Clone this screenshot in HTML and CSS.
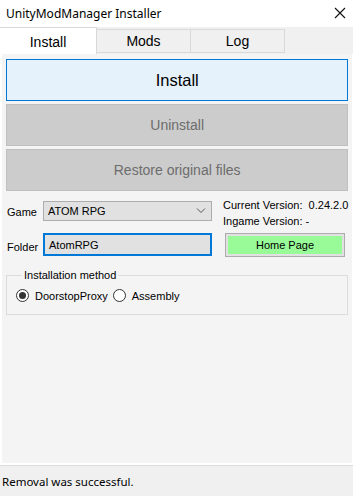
FILE: index.html
```html
<!DOCTYPE html>
<html lang="en">
<head>
  <meta charset="UTF-8">
  <meta name="viewport" content="width=device-width, initial-scale=1.0">
  <title>UnityModManager Installer</title>
  <link rel="stylesheet" href="styles.css">
</head>
<body>
  <div class="titlebar">
    <span class="title">UnityModManager Installer</span>
    <svg class="close" width="12" height="12" viewBox="0 0 12 12">
      <path d="M1 1 L11 11 M11 1 L1 11" stroke="#111" stroke-width="1.1" fill="none"/>
    </svg>
  </div>

  <div class="tabs">
    <div class="tab active">Install</div>
    <div class="tab">Mods</div>
    <div class="tab">Log</div>
  </div>

  <div class="main">
    <div class="page">
      <button class="big-btn primary">Install</button>
      <button class="big-btn" disabled>Uninstall</button>
      <button class="big-btn" disabled>Restore original files</button>

      <div class="settings">
        <span class="label">Game</span>
        <div class="combo">
          <span>ATOM RPG</span>
          <svg width="10" height="6" viewBox="0 0 10 6">
            <path d="M1 0.5 L5 4.5 L9 0.5" stroke="#555" stroke-width="1" fill="none"/>
          </svg>
        </div>
        <div class="versions">
          <div>Current Version:&nbsp; 0.24.2.0</div>
          <div>Ingame Version: -</div>
        </div>

        <span class="label">Folder</span>
        <div class="folder">AtomRPG</div>
        <button class="home-btn">Home Page</button>
      </div>

      <fieldset class="method">
        <legend>Installation method</legend>
        <label class="radio checked"><span class="dot"></span>DoorstopProxy</label>
        <label class="radio"><span class="dot"></span>Assembly</label>
      </fieldset>
    </div>
  </div>

  <div class="status">Removal was successful.</div>
</body>
</html>
```

FILE: styles.css
```css
* {
  box-sizing: border-box;
}

body {
  margin: 0;
  width: 353px;
  height: 496px;
  display: flex;
  flex-direction: column;
  background-color: #ffffff;
  font-family: "Liberation Sans", Arial, sans-serif;
  color: #000;
  overflow: hidden;
}

.titlebar {
  height: 27px;
  flex-shrink: 0;
  display: flex;
  align-items: center;
  justify-content: space-between;
  padding: 0 7px 0 6px;
  font-family: "Noto Sans", sans-serif;
  font-size: 12px;
}

.close {
  margin-top: -1px;
}

.tabs {
  height: 27px;
  flex-shrink: 0;
  display: flex;
  align-items: flex-start;
  background-color: #f0f0f0;
}

.tab {
  width: 94px;
  height: 24px;
  margin-top: 2px;
  border: 1px solid #d9d9d9;
  border-left: none;
  background-color: #f0f0f0;
  font-size: 14px;
  display: flex;
  align-items: center;
  justify-content: center;
}

.tab.active {
  width: 97px;
  height: 27px;
  margin-top: 0;
  border-bottom: none;
  background-color: #ffffff;
  padding-top: 1px;
}

.main {
  flex: 1;
  display: flex;
  padding: 0 1px 2px 2px;
  border-bottom: 1px solid #dcdcdc;
}

.page {
  flex: 1;
  display: flex;
  flex-direction: column;
  gap: 3px;
  padding: 5px 4px;
  background-color: #f4f4f4;
}

.big-btn {
  height: 42px;
  margin: 0;
  border: 1px solid #bfbfbf;
  background-color: #cccccc;
  color: #6d6d6d;
  font-family: "Liberation Sans", Arial, sans-serif;
  font-size: 14px;
}

.big-btn.primary {
  border-color: #0078d7;
  background-color: #e5f1fb;
  color: #000;
  font-size: 16.5px;
}

.settings {
  display: grid;
  grid-template-columns: 37px 169px 1fr;
  grid-template-rows: 28px 24px;
  row-gap: 8px;
  margin-top: 3px;
  font-size: 11px;
}

.label {
  padding-left: 1px;
  align-self: center;
}

.settings .label:first-child {
  margin-top: 2px;
}

.settings .label:nth-of-type(2) {
  margin-top: 3px;
}

.combo {
  height: 20px;
  margin-top: 4px;
  border: 1px solid #adadad;
  background-color: #e1e1e1;
  display: flex;
  align-items: center;
  justify-content: space-between;
  padding: 0 5px 0 4px;
}

.versions {
  padding-left: 11px;
  line-height: 16px;
  white-space: nowrap;
}

.folder {
  height: 23px;
  border: 2px solid #0078d7;
  background-color: #e1e1e1;
  padding: 0 4px;
  display: flex;
  align-items: center;
}

.home-btn {
  width: 120px;
  height: 24px;
  margin: 0 0 0 13px;
  padding: 0;
  border: 1px solid #adadad;
  background-color: #98fb98;
  box-shadow: inset 0 0 0 2px #e1e1e1;
  font-family: "Liberation Sans", Arial, sans-serif;
  font-size: 11px;
  color: #000;
}

.method {
  margin: 9px 0 0 0;
  padding: 8px 8px 12px 9px;
  border: 1px solid #dcdcdc;
  display: flex;
  align-items: center;
  gap: 5px;
  font-size: 11px;
}

.method legend {
  margin-left: 6px;
  padding: 0 2px;
}

.radio {
  display: flex;
  align-items: center;
  gap: 6px;
}

.dot {
  width: 13px;
  height: 13px;
  border: 1px solid #333;
  border-radius: 50%;
  background-color: #fff;
  display: flex;
  align-items: center;
  justify-content: center;
}

.radio.checked .dot::after {
  content: "";
  width: 7px;
  height: 7px;
  border-radius: 50%;
  background-color: #333;
}

.status {
  height: 30px;
  flex-shrink: 0;
  display: flex;
  align-items: center;
  padding-left: 2px;
  background-color: #f0f0f0;
  font-family: "Noto Sans", sans-serif;
  font-size: 11.5px;
}
```
